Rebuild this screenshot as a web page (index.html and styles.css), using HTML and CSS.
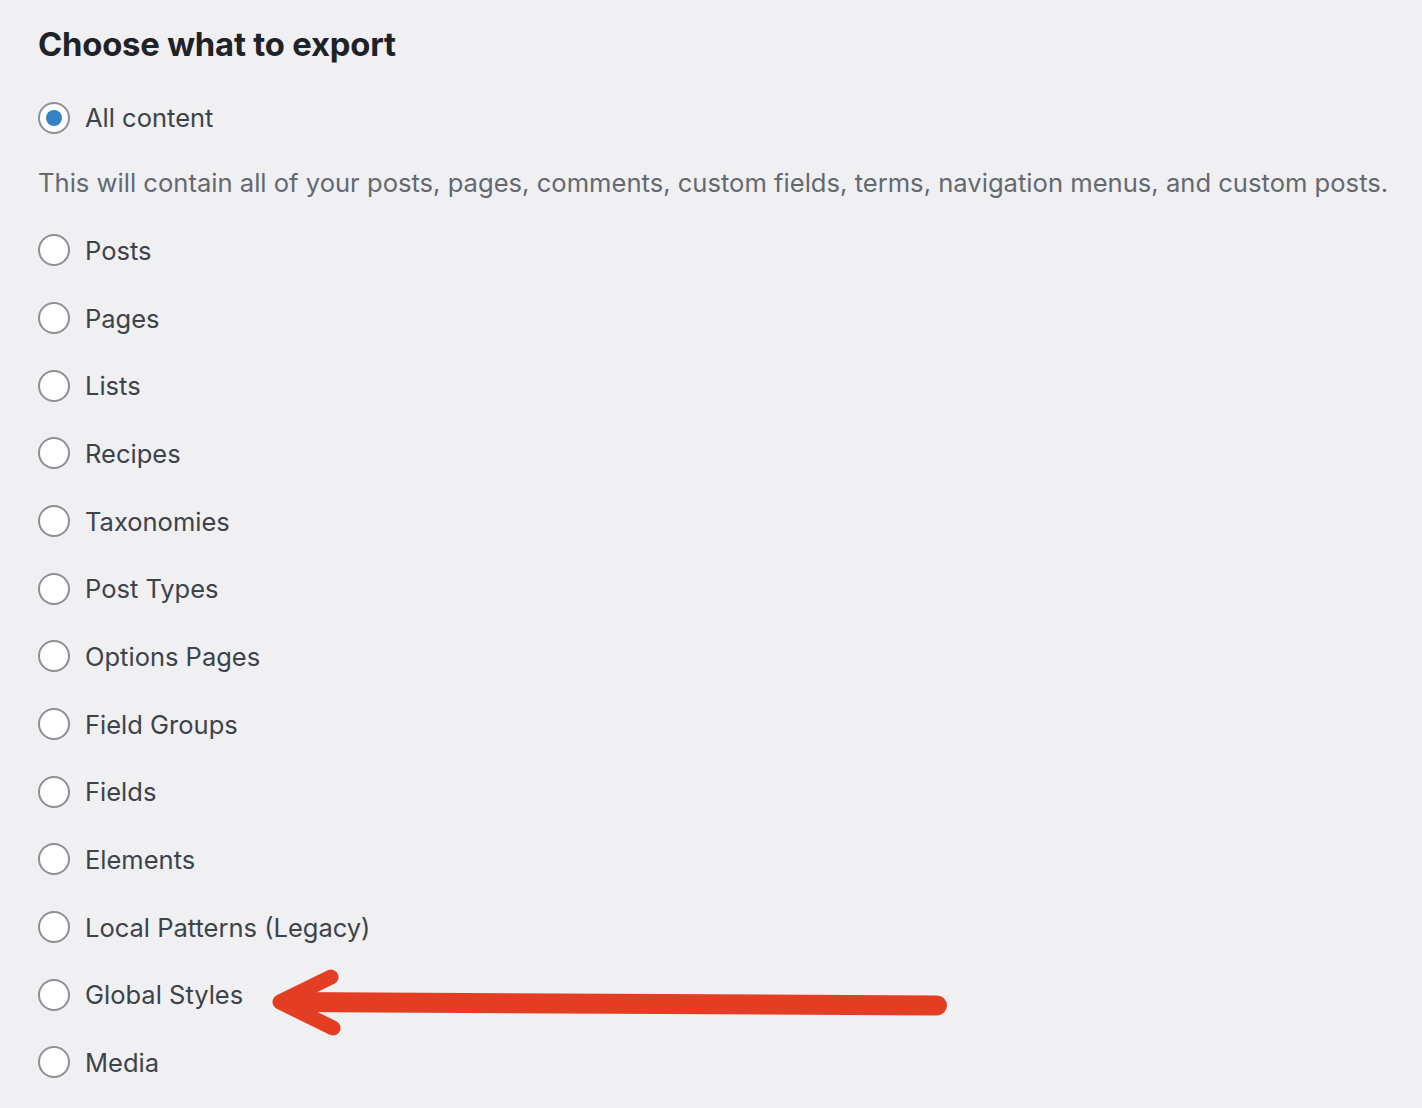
FILE: index.html
```html
<!DOCTYPE html>
<html lang="en">
<head>
<meta charset="utf-8">
<title>Export</title>
<link rel="stylesheet" href="styles.css">
</head>
<body>
<main class="page">
  <h2 class="title">Choose what to export</h2>
  <div class="choice first">
    <input type="radio" name="content" class="radio" id="all" checked>
    <label for="all">All content</label>
  </div>
  <p class="desc">This will contain all of your posts, pages, comments, custom fields, terms, navigation menus, and custom posts.</p>
  <ul class="options">
    <li class="choice"><input type="radio" name="content" class="radio" id="o1"><label for="o1">Posts</label></li>
    <li class="choice"><input type="radio" name="content" class="radio" id="o2"><label for="o2">Pages</label></li>
    <li class="choice"><input type="radio" name="content" class="radio" id="o3"><label for="o3">Lists</label></li>
    <li class="choice"><input type="radio" name="content" class="radio" id="o4"><label for="o4">Recipes</label></li>
    <li class="choice"><input type="radio" name="content" class="radio" id="o5"><label for="o5">Taxonomies</label></li>
    <li class="choice"><input type="radio" name="content" class="radio" id="o6"><label for="o6">Post Types</label></li>
    <li class="choice"><input type="radio" name="content" class="radio" id="o7"><label for="o7">Options Pages</label></li>
    <li class="choice"><input type="radio" name="content" class="radio" id="o8"><label for="o8">Field Groups</label></li>
    <li class="choice"><input type="radio" name="content" class="radio" id="o9"><label for="o9">Fields</label></li>
    <li class="choice"><input type="radio" name="content" class="radio" id="o10"><label for="o10">Elements</label></li>
    <li class="choice"><input type="radio" name="content" class="radio" id="o11"><label for="o11">Local Patterns (Legacy)</label></li>
    <li class="choice"><input type="radio" name="content" class="radio" id="o12"><label for="o12">Global Styles</label></li>
    <li class="choice"><input type="radio" name="content" class="radio" id="o13"><label for="o13">Media</label></li>
  </ul>
  <svg class="arrow" width="700" height="90" viewBox="0 0 700 90" aria-hidden="true">
    <path d="M675 45.5 L26 42" stroke="#e33d23" stroke-width="20" stroke-linecap="round" fill="none"/>
    <path d="M69 17 L18 42 L71 68" stroke="#e33d23" stroke-width="15" stroke-linecap="round" stroke-linejoin="round" fill="none"/>
  </svg>
</main>
</body>
</html>
```
FILE: styles.css
```css
html, body {
  margin: 0;
  padding: 0;
  background: #f0eff2;
}
body {
  font-family: Inter, "Noto Sans", "Liberation Sans", sans-serif;
  color: #3c434a;
}
.page {
  position: relative;
  padding: 24px 0 0 38px;
}
.title {
  margin: 0;
  font-size: 32.8px;
  font-weight: 700;
  color: #1d2327;
  line-height: 40px;
  letter-spacing: -0.2px;
}
.choice {
  display: flex;
  align-items: center;
  gap: 15px;
  height: 67.67px;
  font-size: 25.5px;
  color: #3c434a;
}
.choice.first {
  margin-top: 20px;
}
.radio {
  appearance: none;
  -webkit-appearance: none;
  margin: 0;
  width: 32px;
  height: 32px;
  border: 2px solid #8c8f94;
  border-radius: 50%;
  background: #fff;
  box-sizing: border-box;
  display: grid;
  place-items: center;
  flex: none;
}
.radio:checked::before {
  content: "";
  width: 16px;
  height: 16px;
  border-radius: 50%;
  background: #3582c4;
}
.desc {
  margin: 0;
  height: 64px;
  padding-bottom: 2px;
  box-sizing: border-box;
  display: flex;
  align-items: center;
  font-size: 25.6px;
  color: #646970;
}
.options {
  list-style: none;
  margin: 0;
  padding: 0;
  padding-top: 1px;
}
.arrow {
  position: absolute;
  left: 262px;
  top: 960px;
}
```
